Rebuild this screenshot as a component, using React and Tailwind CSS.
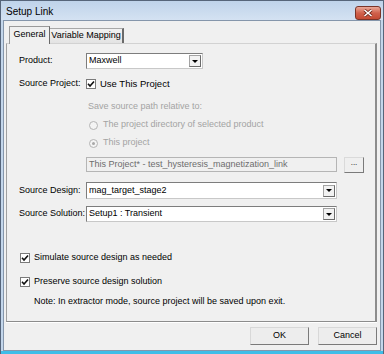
// Setup Link dialog (Windows 7 basic theme look)

const Check = () => (
  <svg width="8" height="8" viewBox="0 0 8 8">
    <path d="M1 3.8 L3 6 L7 1.5" stroke="#111" strokeWidth="1.6" fill="none" />
  </svg>
);

const CheckBox = ({ checked }) => (
  <div className="w-[10px] h-[10px] border border-[#7a7a7a] bg-white flex items-center justify-center shrink-0">
    {checked && <Check />}
  </div>
);

const Radio = ({ checked }) => (
  <div className="w-[9px] h-[9px] rounded-full border border-[#b4b4b4] bg-[#f4f4f4] flex items-center justify-center shrink-0">
    {checked && <div className="w-[3px] h-[3px] rounded-full bg-[#a8a8a8]" />}
  </div>
);

const Select = ({ value, width }) => (
  <div
    className="h-full flex items-center bg-white border border-[#7d7d7d] border-r-[#c8c8c8] border-b-[#c8c8c8] pl-[2px] pr-[1px]"
    style={{ width }}
  >
    <span className="flex-1 text-[9px] text-black truncate">{value}</span>
    <div className="w-[12px] h-[12px] bg-[#f2f2f2] border border-[#a3a3a3] border-r-[#6b6b6b] border-b-[#6b6b6b] flex items-center justify-center">
      <div className="w-0 h-0 border-l-[3px] border-r-[3px] border-t-[3px] border-l-transparent border-r-transparent border-t-black" />
    </div>
  </div>
);

const Label = ({ children }) => (
  <span className="w-[67px] text-[9px] text-black whitespace-nowrap">{children}</span>
);

const Button = ({ children }) => (
  <div className="w-[59px] h-[18px] bg-[#ededed] border border-[#7a7a7a] border-t-[#d8d8d8] border-l-[#d8d8d8] flex items-center justify-center text-[9px] text-black">
    {children}
  </div>
);

export default function App() {
  return (
    <div className="w-[384px] h-[354px] flex flex-col bg-[#c3d6eb] border border-b-0 border-[#56657a] font-['Liberation_Sans',sans-serif] select-none">
      {/* Title bar */}
      <div className="h-[19px] flex items-center justify-between pl-[5px] pr-[2px] bg-gradient-to-b from-[#bfd3ea] to-[#d4e2f2]">
        <span className="text-[10px] text-black mt-[1px]">Setup Link</span>
        <div className="w-[26px] h-[14px] mt-[4px] rounded-[3px] border border-[#7a3428] bg-gradient-to-b from-[#e9a898] via-[#d0614c] to-[#c44a33] flex items-center justify-center">
          <svg width="10" height="8" viewBox="0 0 10 8">
            <path d="M1.5 1 L8.5 7 M8.5 1 L1.5 7" stroke="#6b2418" strokeWidth="3" />
            <path d="M1.5 1 L8.5 7 M8.5 1 L1.5 7" stroke="#fff" strokeWidth="1.6" />
          </svg>
        </div>
      </div>

      {/* Body */}
      <div className="flex-1 mx-[2px] border border-[#8596ab] bg-[#f0f0f0] flex flex-col pl-[2px] pr-[3px]">
        {/* Tabs */}
        <div className="flex items-end pt-[5px] pl-[3px] h-[22px]">
          <div className="relative z-10 h-[18px] -mb-[1px] w-[41px] bg-[#f0f0f0] border border-b-0 border-[#9a9a9a] border-r-[#6a6a6a] flex items-center justify-center text-[9px] text-black pb-[2px] whitespace-nowrap">
            General
          </div>
          <div className="h-[15px] w-[74px] bg-gradient-to-b from-[#f2f2f2] to-[#e3e3e3] border border-l-0 border-b-0 border-[#a8a8a8] border-r-[#6a6a6a] border-r-2 flex items-center justify-center text-[9px] text-black whitespace-nowrap">
            Variable Mapping
          </div>
        </div>

        {/* Panel */}
        <div className="h-[279px] border-t border-l border-t-[#d2d2d2] border-l-[#a0a0a0] border-r-2 border-r-[#8c8c8c] border-b border-b-[#8c8c8c] shadow-[0_1px_0_#fff] flex flex-col pl-[12px]">
          <div className="flex items-center h-[16px] mt-[9px]">
            <Label>Product:</Label>
            <Select value="Maxwell" width="117px" />
          </div>

          <div className="flex items-center h-[14px] mt-[8px]">
            <Label>Source Project:</Label>
            <CheckBox checked />
            <span className="ml-[4px] text-[9.5px] text-black">Use This Project</span>
          </div>

          <div className="flex items-center h-[12px] mt-[10px] pl-[69px] text-[9px] text-[#a3a3a3]">
            Save source path relative to:
          </div>

          <div className="flex items-center h-[12px] mt-[6px] pl-[70px]">
            <Radio />
            <span className="ml-[5px] text-[9px] text-[#a3a3a3]">The project directory of selected product</span>
          </div>

          <div className="flex items-center h-[12px] mt-[6px] pl-[70px]">
            <Radio checked />
            <span className="ml-[5px] text-[9px] text-[#a3a3a3]">This project</span>
          </div>

          <div className="flex items-center h-[15px] mt-[8px] pl-[67px]">
            <div className="w-[251px] h-full flex items-center bg-[#f0f0f0] border border-[#b5b5b5] pl-[2px] text-[9px] text-[#6d6d6d] truncate">
              This Project* - test_hysteresis_magnetization_link
            </div>
            <div className="ml-[7px] w-[20px] h-[16px] bg-[#efefef] border border-[#7a7a7a] border-t-[#dadada] border-l-[#dadada] flex items-center justify-center text-[8px] text-black pb-[3px]">
              ...
            </div>
          </div>

          <div className="flex items-center h-[17px] mt-[10px]">
            <Label>Source Design:</Label>
            <Select value="mag_target_stage2" width="251px" />
          </div>

          <div className="flex items-center h-[16px] mt-[7px]">
            <Label>Source Solution:</Label>
            <Select value="Setup1 : Transient" width="251px" />
          </div>

          <div className="flex items-center h-[12px] mt-[30px] pl-[1px]">
            <CheckBox checked />
            <span className="ml-[4px] text-[9px] text-black">Simulate source design as needed</span>
          </div>

          <div className="flex items-center h-[12px] mt-[12px] pl-[1px]">
            <CheckBox checked />
            <span className="ml-[4px] text-[9px] text-black">Preserve source design solution</span>
          </div>

          <div className="flex items-center h-[12px] mt-[8px] pl-[15px] text-[9px] text-black">
            Note: In extractor mode, source project will be saved upon exit.
          </div>
        </div>

        {/* Buttons */}
        <div className="flex justify-end gap-[9px] mt-[5px]">
          <Button>OK</Button>
          <Button>Cancel</Button>
        </div>
      </div>

      <div className="h-[3px] bg-[#3fbde8]" />
    </div>
  );
}
